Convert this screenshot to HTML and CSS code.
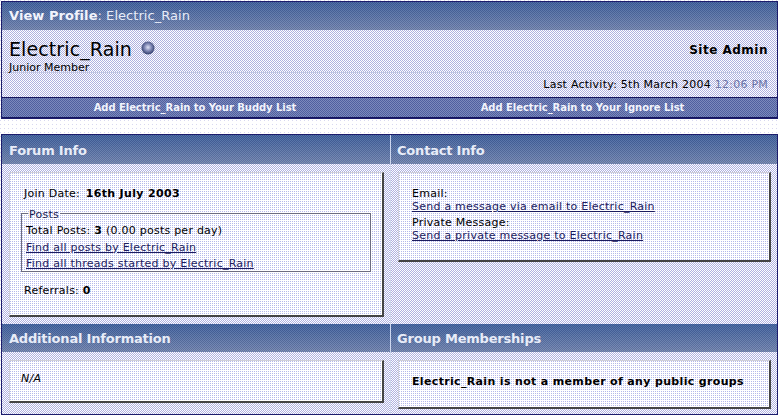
FILE: index.html
```html
<!DOCTYPE html>
<html lang="en">
<head>
<meta charset="utf-8">
<title>View Profile: Electric_Rain</title>
<link rel="stylesheet" href="styles.css">
</head>
<body>
<section class="table top">
  <h1 class="bar head"><b>View Profile</b>: Electric_Rain</h1>
  <div class="profile">
    <div class="who">
      <div>
        <div class="name-row"><span class="name">Electric_Rain</span>
          <svg class="status" width="14" height="14" viewBox="0 0 14 14" aria-label="offline">
            <defs><radialGradient id="ball" cx="50%" cy="45%" r="55%"><stop offset="0" stop-color="#dfe2f4"/><stop offset=".5" stop-color="#7f87b4"/><stop offset="1" stop-color="#2e3a68"/></radialGradient></defs>
            <circle cx="7" cy="7" r="6.5" fill="url(#ball)"/>
          </svg>
        </div>
        <div class="rank">Junior Member</div>
      </div>
      <div class="role">Site Admin</div>
    </div>
    <div class="activity">Last Activity: 5th March 2004 <span class="time">12:06 PM</span></div>
  </div>
  <nav class="actions">
    <a href="#">Add Electric_Rain to Your Buddy List</a>
    <a href="#">Add Electric_Rain to Your Ignore List</a>
  </nav>
</section>

<section class="table grid">
  <h2 class="bar sec first">Forum Info</h2>
  <h2 class="bar sec first">Contact Info</h2>
  <div class="cell">
    <div class="box forum">
      <div>Join Date: <b>16th July 2003</b></div>
      <fieldset>
        <legend>Posts</legend>
        <div>Total Posts: <b>3</b> (0.00 posts per day)</div>
        <div><a href="#">Find all posts by Electric_Rain</a></div>
        <div><a href="#">Find all threads started by Electric_Rain</a></div>
      </fieldset>
      <div class="ref">Referrals: <b>0</b></div>
    </div>
  </div>
  <div class="cell">
    <div class="box contact">
      <div>Email:<br><a href="#">Send a message via email to Electric_Rain</a></div>
      <div class="pm">Private Message:<br><a href="#">Send a private message to Electric_Rain</a></div>
    </div>
  </div>
  <h2 class="bar sec">Additional Information</h2>
  <h2 class="bar sec">Group Memberships</h2>
  <div class="cell">
    <div class="box extra"><i>N/A</i></div>
  </div>
  <div class="cell">
    <div class="box groups"><b>Electric_Rain is not a member of any public groups</b></div>
  </div>
</section>
</body>
</html>
```
FILE: styles.css
```css
* { box-sizing: border-box; }
html, body { height: 100%; }
body {
  margin: 0;
  padding: 1px 1px 0;
  font: 11px/13px "DejaVu Sans", Verdana, sans-serif;
  letter-spacing: .24px;
  color: #000;
  overflow: hidden;
  background: conic-gradient(from 270deg at 1px 1px, #d8d8f0 25%, #fff 0) 0 0 / 4px 4px;
}
h1, h2 { margin: 0; font-weight: normal; }
a { color: #1c1c60; }
b { letter-spacing: .34px; }
.table { border: 1px solid #1c1c6c; }
.bar {
  color: #e8ecf8;
  font-weight: bold;
  display: flex;
  align-items: center;
  background:
    repeating-conic-gradient(rgba(255,255,255,.1) 0 25%, rgba(0,0,40,.1) 0 50%) 0 0 / 2px 2px,
    linear-gradient(#3d5f9c, #7083ae);
}
.head { height: 28px; padding-left: 7px; font-size: 13px; font-weight: normal; display: block; line-height: 28px; white-space: pre; letter-spacing: .05px; }
.head b { color: #f2f4fc; letter-spacing: .05px; }
.profile {
  height: 67px;
  background: repeating-conic-gradient(#fff 0 25%, #aeb0e0 0 50%) 0 0 / 2px 2px;
  display: flex;
  flex-direction: column;
}
.who {
  height: 43px;
  padding: 9px 9px 0 7px;
  display: flex;
  justify-content: space-between;
  border-bottom: 1px solid #c4c8e4;
}
.name-row { display: flex; align-items: center; gap: 9px; height: 20px; }
.name { font-size: 19px; line-height: 20px; letter-spacing: .1px; }
.status { margin-top: -3px; }
.rank { line-height: 14px; margin-top: 2px; letter-spacing: 0; }
.role { font-weight: bold; font-size: 12px; line-height: 20px; letter-spacing: .5px; margin-top: 1px; }
.activity { text-align: right; padding: 5px 9px 0 0; }
.time { color: #6b75a8; }
.actions {
  height: 21px;
  display: grid;
  grid-template-columns: 386px 1fr;
  border-top: 1px solid #14145c;
  background: repeating-conic-gradient(#7d8abc 0 25%, #4f5f9f 0 50%) 0 0 / 2px 2px;
  border-bottom: 1px solid #14145c;
}
.actions a {
  color: #f2f4fc;
  font-weight: bold;
  font-size: 10px;
  line-height: 19px;
  letter-spacing: -.05px;
  text-decoration: none;
  text-align: center;
}
.grid {
  margin-top: 15px;
  display: grid;
  grid-template-columns: 388px 1fr;
  grid-template-rows: 29px 160px 28px 62px;
  height: 281px;
  background: repeating-conic-gradient(#fff 0 25%, #aeb0e0 0 50%) 0 0 / 2px 2px;
}
.sec { font-size: 13px; padding-left: 7px; letter-spacing: -.2px; }
.first { padding-top: 2px; }
.sec:nth-of-type(even) { border-left: 1px solid #cdd6ee; padding-left: 6px; }
.cell { padding: 8px 6px 0 7px; }
.cell:nth-of-type(even) { padding-left: 7px; border-left: 1px solid #d0d6ec; }
.box {
  background: conic-gradient(from 270deg at 1px 1px, #b4b8ea 25%, #fff 0) 0 0 / 2px 2px;
  border-right: 2px solid #444;
  border-bottom: 2px solid #444;
  border-top: 1px solid #cfcfd8;
  border-left: 1px solid #cfcfd8;
}
.forum { height: 145px; padding: 14px 0 0 14px; }
.forum > div:first-child b { margin-left: 2px; }
fieldset {
  margin: 8px 11px 0 -3px;
  padding: 4px 4px 1px 4px;
  height: 64px;
  border: 1px solid #6c6c80;
  line-height: 16.5px;
}
legend { padding: 0 1px; margin-left: 2px; line-height: 11px; color: #1a1a50; transform: translateY(1px); }
.ref { margin-top: 12px; }
.contact { height: 90px; padding: 14px 0 0 13px; }
.pm { margin-top: 3px; }
.extra { height: 43px; padding: 11px 0 0 11px; }
.groups { height: 49px; padding: 14px 0 0 13px; }
```
